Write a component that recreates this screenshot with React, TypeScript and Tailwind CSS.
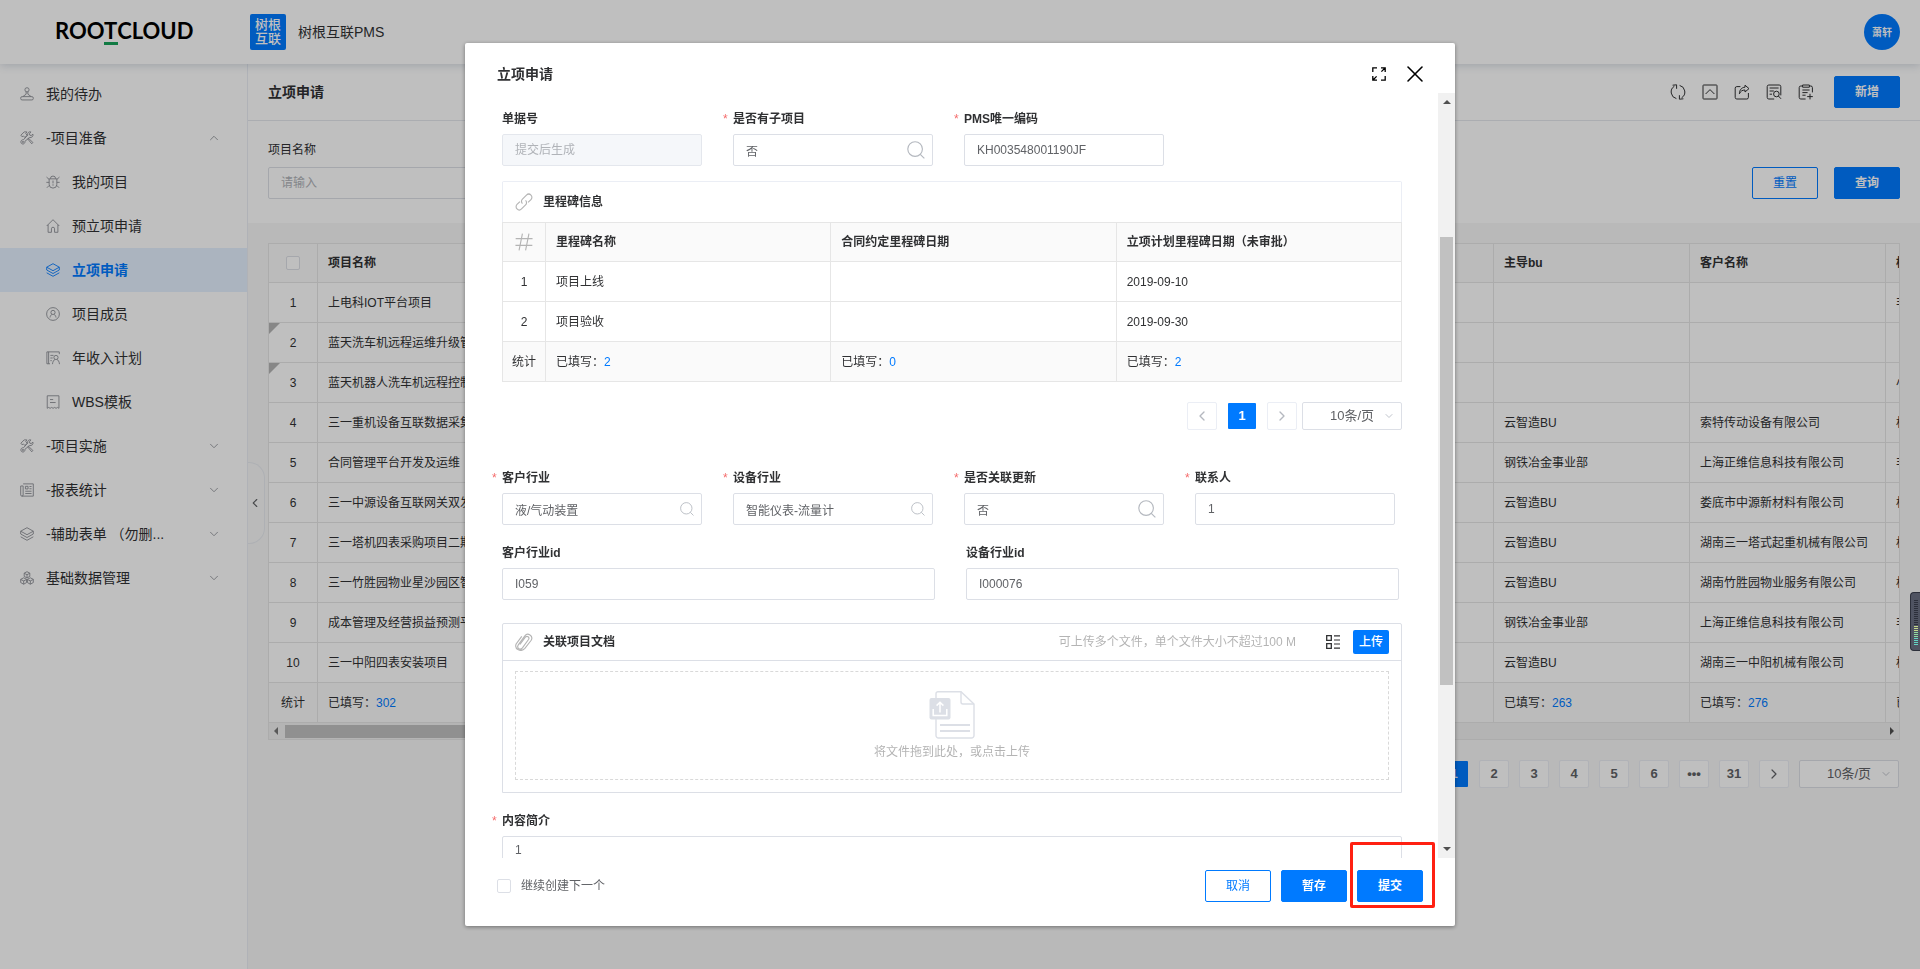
import React from 'react';
import { ChevronDown, ChevronLeft, ChevronRight, ChevronUp, X } from 'lucide-react';

type IconProps = { className?: string };

const stroke = {
  viewBox: '0 0 16 16',
  fill: 'none',
  stroke: 'currentColor',
  strokeWidth: 1,
  'aria-hidden': true,
};

function StampIcon({ className }: IconProps) {
  return (
    <svg {...stroke} className={className}>
      <circle cx="8" cy="3.2" r="2.4" />
      <path d="M7 5.6v2.6L3.2 11M9 5.6v2.6l3.8 2.8" />
      <rect x="0.8" y="11" width="14.4" height="3.8" rx="1.6" />
    </svg>
  );
}

function ToolsIcon({ className }: IconProps) {
  return (
    <svg {...stroke} className={className}>
      <path d="M1 4.8 4.8 1h3L6.6 3l1.6 1.8-2.6 2.6L3.8 5.6 2.4 6.6z" />
      <path d="m8.6 8.8 4.8 5.8 1.4-1.4-5.4-5.2" />
      <path d="M14.8 3.6 12.8 5.2l-1.6-.4-.4-1.6L12.4 1c-2.2-.6-4.2 1.2-3.6 3.6L4 10c-1.8-.2-3.2 1-3 2.8.2 1.6 2 2.6 3.4 1.8 1-.6 1.4-1.6 1.2-2.8l5.4-4.4c2.4.6 4.4-1.4 3.8-3.8z" />
      <circle cx="3.4" cy="12.5" r="0.7" />
    </svg>
  );
}

function BugIcon({ className }: IconProps) {
  return (
    <svg {...stroke} className={className}>
      <path d="M5 4.2a3 3 0 0 1 6 0" />
      <path d="M3.6 4.4h8.8v6.2a4.4 4.4 0 0 1-8.8 0z" />
      <path d="M.6 2.4 3.6 5M15.4 2.4 12.4 5M.4 8.4h3.2M15.6 8.4h-3.2M1 14.6l2.8-2.8M15 14.6l-2.8-2.8M8 6.4v3.2M8 10.6v1.6" />
    </svg>
  );
}

function HomeIcon({ className }: IconProps) {
  return (
    <svg {...stroke} className={className}>
      <path d="M.8 8 8 .8 15.2 8M2.4 6.6v8.6h3.8V11.2a1.8 1.8 0 0 1 3.6 0v4h3.8V6.6" />
    </svg>
  );
}

function LayersIcon({ className }: IconProps) {
  return (
    <svg {...stroke} className={className}>
      <path d="M8 .8 15.2 4.8 8 8.8.8 4.8z" />
      <path d="M.8 8 8 12l7.2-4M.8 11.2 8 15.2l7.2-4M.8 4.8V8M15.2 4.8V8" />
    </svg>
  );
}

function MemberIcon({ className }: IconProps) {
  return (
    <svg {...stroke} className={className}>
      <circle cx="8" cy="8" r="7.3" />
      <circle cx="8" cy="6.2" r="2.4" />
      <path d="M4.6 12c.2-2 1.2-3 2.2-3.5M11.4 12c-.2-2-1.2-3-2.2-3.5" />
    </svg>
  );
}

function PlanIcon({ className }: IconProps) {
  return (
    <svg {...stroke} className={className}>
      <path d="M4.6 14.6H1V1h14.2v2.6M3 1v13.6M5 5h3.6M5 8h2.6M5 11h1.6" />
      <circle cx="11.4" cy="7.4" r="2.4" />
      <path d="M7.4 15c.2-3 1.6-4.6 2.8-5.4M15.4 15c-.2-3-1.6-4.6-2.8-5.4" />
    </svg>
  );
}

function TemplateIcon({ className }: IconProps) {
  return (
    <svg {...stroke} className={className}>
      <path d="M1.4 15.2V.9h13.4v14.3l-1.6-1-1.7 1-1.7-1-1.7 1-1.7-1-1.7 1-1.7-1z" />
      <path d="M4.6 5.2h3.6M4.6 8.6h6.4" />
    </svg>
  );
}

function NewsIcon({ className }: IconProps) {
  return (
    <svg {...stroke} className={className}>
      <path d="M3.6 1h11.6v14H2.2A1.4 1.4 0 0 1 .8 13.6V3.4h2.8M3.6 3.4v10.2A1.4 1.4 0 0 1 2.2 15" />
      <path d="M6.2 3.8h3v3h-3zM10.8 4h2.4M10.8 6.6h2.4M6 9.4h7.2M6 12h7.2" />
    </svg>
  );
}

function BoxesIcon({ className }: IconProps) {
  return (
    <svg {...stroke} className={className}>
      <path d="M8 .8 11.2 2.4v3.8L8 7.9 4.8 6.2V2.4zM4.2 7.8l3.3 1.7v3.7l-3.3 1.9L.8 13.2V9.5zM11.8 7.8l3.4 1.7v3.7l-3.4 1.9-3.3-1.9V9.5z" />
      <path d="M4.8 2.6 8 4.2l3.2-1.6M8 4.2v3.6M.8 9.7l3.4 1.6 3.3-1.6M4.2 11.3V15M8.5 9.7l3.3 1.6 3.4-1.6M11.8 11.3V15" />
    </svg>
  );
}

function RefreshIcon({ className }: IconProps) {
  return (
    <svg {...stroke} className={className}>
      <path d="M6.4 14.6A6.8 6.8 0 0 1 4.4 2.2M9.6 1.4a6.8 6.8 0 0 1 2 12.4" />
      <path d="M2.6 1.2 6.6.8v4M13.4 14.8l-4 .4v-4" />
    </svg>
  );
}

function CollapseIcon({ className }: IconProps) {
  return (
    <svg {...stroke} className={className}>
      <rect x="1" y="1" width="14" height="14" rx="0.6" />
      <path d="m3.6 10 4.400-4.400 4.400 4.400" />
    </svg>
  );
}

function ShareIcon({ className }: IconProps) {
  return (
    <svg {...stroke} className={className}>
      <path d="M6.4 2.6H2.8a1.6 1.6 0 0 0-1.6 1.6v9.2A1.6 1.6 0 0 0 2.8 15h10a1.6 1.6 0 0 0 1.6-1.6V9" />
      <path d="M11 1.2 15 4.6l-4 3.4V6C8.2 6 6.6 7.2 5.4 9.8 5.4 6 7.6 3.4 11 3.2z" />
    </svg>
  );
}

function LogIcon({ className }: IconProps) {
  return (
    <svg {...stroke} className={className}>
      <path d="M8.2 15H2.8a1.6 1.6 0 0 1-1.6-1.6V2.6A1.6 1.6 0 0 1 2.8 1h10.4a1.6 1.6 0 0 1 1.6 1.6v8.8" />
      <path d="M3.6 4h9M3.6 7h4.2M3.6 10.2h2.4" />
      <circle cx="10.4" cy="10" r="2.8" />
      <path d="m12.4 12 2.6 2.8" />
    </svg>
  );
}

function ClipboardIcon({ className }: IconProps) {
  return (
    <svg {...stroke} className={className}>
      <path d="M4.4 2H2.8a1.6 1.6 0 0 0-1.6 1.6v9.8A1.6 1.6 0 0 0 2.8 15h4.800M11.6 2h1.2a1.6 1.6 0 0 1 1.6 1.6v4.800" />
      <path d="M4.6 1h6.8v2.2H4.6zM4.4 6h7.2M4.4 8.6h5.2M4.4 11.2h3.2M12 9.8v5.6M9.2 12.6h5.6" />
    </svg>
  );
}

function LinkIcon({ className }: IconProps) {
  return (
    <svg {...stroke} className={className}>
      <path d="M6.6 9.4a2.8 2.8 0 0 1 0-4l3.6-3.6a2.8 2.8 0 0 1 4 4l-2.6 2.6" />
      <path d="M9.4 6.6a2.8 2.8 0 0 1 0 4l-3.6 3.6a2.8 2.8 0 0 1-4-4l2.6-2.6" />
    </svg>
  );
}

function HashIcon({ className }: IconProps) {
  return (
    <svg {...stroke} className={className}>
      <path d="M6.6.6 3.6 15.4M12.4.6 9.4 15.4M.6 5h15M.4 11h15" />
    </svg>
  );
}

function ClipIcon({ className }: IconProps) {
  return (
    <svg {...stroke} className={className}>
      <path d="m4.4 10.2 4.8-6.4c1.5-1.9 4.1 0 2.8 2l-5.4 7.4c-2 2.5-5.4.2-3.7-2.6L8.800 2.500C11.200-.7 16.600 2.500 14.400 6.500l-5.600 7.200C5.400 17.500-.8 14.400 1 9.800L6 3" />
    </svg>
  );
}

function SearchIcon({ className }: IconProps) {
  return (
    <svg {...stroke} className={className}>
      <circle cx="7.2" cy="7.2" r="6.5" />
      <path d="m11.800 11.800 3.600 3.600" />
    </svg>
  );
}

function ExpandIcon({ className }: IconProps) {
  return (
    <svg viewBox="0 0 14 14" fill="none" stroke="currentColor" strokeWidth="1.3" className={className} aria-hidden>
      <path d="M5 .8H.8V5M9 .8h4.2V5M13 1 9.4 4.6M5 13.2H.8V9M1 13l3.6-3.6M9 13.2h4.2V9" />
    </svg>
  );
}

function ListIcon({ className }: IconProps) {
  return (
    <svg viewBox="0 0 14 14" fill="none" stroke="currentColor" className={className} aria-hidden>
      <path d="M.7.7h4.6v4.6H.7zM.7 8.7h4.6v4.6H.7z" strokeWidth="1.3" />
      <path d="M8 .8h6M8 5h6M8 9h6M8 13.2h6" strokeWidth="1.2" />
    </svg>
  );
}

function UploadPicture({ className }: IconProps) {
  return (
    <svg viewBox="0 0 46 48" fill="none" className={className} aria-hidden>
      <path d="M9 .7h23L45 13v31.500a2.500 2.500 0 0 1-2.500 2.500H9.500A2.500 2.500 0 0 1 7 44.500V2.700a2 2 0 0 1 2-2z" fill="#fff" stroke="#dcdfe6" strokeWidth="1.4" />
      <path d="M32 .7V11a2 2 0 0 0 2 2h11" stroke="#dcdfe6" strokeWidth="1.4" />
      <path d="M11 34h30M11 40h30" stroke="#dcdfe6" strokeWidth="2" />
      <rect x="0.5" y="7" width="21" height="21.5" rx="2" fill="#dcdfe6" />
      <path d="M4.2 18v6.6h13.6V18M11 21.5v-10M7.6 14.6 11 11.2l3.4 3.4" stroke="#fff" strokeWidth="1.5" />
    </svg>
  );
}

interface NavItem {
  label: string;
  icon: React.ComponentType<IconProps>;
  sub?: boolean;
  active?: boolean;
  arrow?: 'up' | 'down';
}

const NAV_ITEMS: NavItem[] = [
  { label: '我的待办', icon: StampIcon },
  { label: '-项目准备', icon: ToolsIcon, arrow: 'up' },
  { label: '我的项目', icon: BugIcon, sub: true },
  { label: '预立项申请', icon: HomeIcon, sub: true },
  { label: '立项申请', icon: LayersIcon, sub: true, active: true },
  { label: '项目成员', icon: MemberIcon, sub: true },
  { label: '年收入计划', icon: PlanIcon, sub: true },
  { label: 'WBS模板', icon: TemplateIcon, sub: true },
  { label: '-项目实施', icon: ToolsIcon, arrow: 'down' },
  { label: '-报表统计', icon: NewsIcon, arrow: 'down' },
  { label: '-辅助表单 （勿删...', icon: LayersIcon, arrow: 'down' },
  { label: '基础数据管理', icon: BoxesIcon, arrow: 'down' },
];

const ROWS = [
  { name: '上电科IOT平台项目', bu: '', client: '', last: '非', flag: false },
  { name: '蓝天洗车机远程运维升级管', bu: '', client: '', last: '', flag: true },
  { name: '蓝天机器人洗车机远程控制', bu: '', client: '', last: '小', flag: true },
  { name: '三一重机设备互联数据采集', bu: '云智造BU', client: '索特传动设备有限公司', last: '标', flag: false },
  { name: '合同管理平台开发及运维', bu: '钢铁冶金事业部', client: '上海正维信息科技有限公司', last: '非', flag: false },
  { name: '三一中源设备互联网关双发', bu: '云智造BU', client: '娄底市中源新材料有限公司', last: '标', flag: false },
  { name: '三一塔机四表采购项目二期', bu: '云智造BU', client: '湖南三一塔式起重机械有限公司', last: '标', flag: false },
  { name: '三一竹胜园物业星沙园区智', bu: '云智造BU', client: '湖南竹胜园物业服务有限公司', last: '标', flag: false },
  { name: '成本管理及经营损益预测平', bu: '钢铁冶金事业部', client: '上海正维信息科技有限公司', last: '非', flag: false },
  { name: '三一中阳四表安装项目', bu: '云智造BU', client: '湖南三一中阳机械有限公司', last: '标', flag: false },
];

const HIDDEN_COLS = [1, 2, 3, 4, 5];

const TOOLS = [
  { label: '刷新', icon: RefreshIcon },
  { label: '收起', icon: CollapseIcon },
  { label: '分享', icon: ShareIcon },
  { label: '日志', icon: LogIcon },
  { label: '导入', icon: ClipboardIcon },
];

function Button({ children, plain }: { children: React.ReactNode; plain?: boolean }) {
  return (
    <button
      type="button"
      className={`w-[66px] h-8 shrink-0 rounded-xs border border-[#007aff] text-xs ${
        plain ? 'bg-white text-[#007aff]' : 'bg-[#007aff] text-white font-bold'
      }`}
    >
      {children}
    </button>
  );
}

function PageButton({ children, active, muted, label }: { children: React.ReactNode; active?: boolean; muted?: boolean; label?: string }) {
  return (
    <button
      type="button"
      aria-label={label}
      className={`w-[30px] h-7 shrink-0 flex items-center justify-center rounded-xs border text-[13px] font-bold ${
        active ? 'bg-[#007aff] bg-clip-padding border-transparent text-white' : 'bg-white border-[#ebeef5]'
      } ${muted ? 'text-[#b4b8bf]' : active ? '' : 'text-[#606266]'}`}
    >
      {children}
    </button>
  );
}

function PageSize({ id }: { id: string }) {
  return (
    <div className="relative w-[100px] h-7">
      <label htmlFor={id} className="sr-only">每页条数</label>
      <select id={id} className="w-full h-full pl-[27px] appearance-none rounded-xs border border-[#dcdfe6] bg-white text-[13px] text-[#606266]">
        <option>10条/页</option>
      </select>
      <ChevronDown className="absolute right-[7px] top-2 w-3 h-3 text-[#c0c4cc] pointer-events-none" strokeWidth={2} />
    </div>
  );
}

interface FieldProps {
  id: string;
  label: string;
  value?: string;
  placeholder?: string;
  required?: boolean;
  disabled?: boolean;
  search?: 'small' | 'large';
}

function FieldLabel({ id, label, required }: { id: string; label: string; required?: boolean }) {
  return (
    <label htmlFor={id} className="relative block text-xs leading-[18px] font-bold text-[#303133]">
      {required && <span className="absolute -left-2.5 text-[#f56c6c] font-normal">*</span>}
      {label}
    </label>
  );
}

function Field({ id, label, value, placeholder, required, disabled, search }: FieldProps) {
  return (
    <div>
      <FieldLabel id={id} label={label} required={required} />
      <div className="relative mt-1.5">
        <input
          id={id}
          type="text"
          defaultValue={value}
          placeholder={placeholder}
          disabled={disabled}
          className={`w-full h-8 px-3 rounded-xs border text-xs text-[#606266] placeholder:text-[#b0b3b8] ${
            disabled ? 'bg-[#f5f7fa] border-[#e4e7ed]' : 'bg-white border-[#dcdfe6]'
          }`}
        />
        {search && (
          <button type="button" aria-label={`搜索${label}`} className="absolute right-2 inset-y-0 flex items-center text-[#b4b8bf]">
            <SearchIcon className={search === 'large' ? 'w-[18px] h-[18px]' : 'w-3.5 h-3.5'} />
          </button>
        )}
      </div>
    </div>
  );
}

function Header() {
  return (
    <header className="relative z-10 h-16 shrink-0 flex items-center pr-5 bg-white shadow-[0_2px_8px_rgba(40,60,100,0.18)]">
      <div className="w-[250px] pl-[55px] pb-0.5 font-['Lato',sans-serif] font-bold text-[22px] leading-[26px] text-black">
        ROO
        <span className="relative">
          T<span className="absolute left-0 -bottom-px w-[14px] h-[3px] bg-[#17a35a]" />
        </span>
        CLOUD
      </div>
      <div className="w-9 h-9 flex items-center justify-center rounded-xs bg-[#007aff] text-white text-[13px] leading-[14px] font-medium text-center">
        树根
        <br />
        互联
      </div>
      <span className="ml-3 flex-1 text-sm text-[#303133]">树根互联PMS</span>
      <div className="w-9 h-9 flex items-center justify-center rounded-full bg-[#007aff] text-white text-[10px] font-bold">萧轩</div>
    </header>
  );
}

function Sidebar() {
  return (
    <nav className="w-[248px] shrink-0 pt-2 bg-white border-r border-[#ebeef5]">
      {NAV_ITEMS.map((item) => (
        <a
          key={item.label}
          href="#"
          className={`h-11 flex items-center gap-3 pr-[26px] text-sm ${item.sub ? 'pl-[46px]' : 'pl-5'} ${
            item.active ? 'bg-[#e5f0ff] text-[#007aff] font-bold' : 'text-[#303133]'
          }`}
        >
          <item.icon className={`w-3.5 h-3.5 shrink-0 ${item.active ? 'text-[#007aff]' : 'text-[#8a8d93]'}`} />
          <span className="flex-1">{item.label}</span>
          {item.arrow === 'up' && <ChevronUp className="w-3.5 h-3.5 text-[#909399]" strokeWidth={1.5} />}
          {item.arrow === 'down' && <ChevronDown className="w-3.5 h-3.5 text-[#909399]" strokeWidth={1.5} />}
        </a>
      ))}
    </nav>
  );
}

function ProjectTable() {
  const cell = 'border-r border-b border-[#e6e6e6] px-2.5 text-left whitespace-nowrap overflow-hidden';
  return (
    <div className="border border-[#e6e6e6] overflow-hidden">
      <table className="w-[1813px] table-fixed border-separate border-spacing-0 text-xs text-[#303133]">
        <colgroup>
          <col className="w-[49px]" />
          {[0, ...HIDDEN_COLS, 6, 7, 8].map((n) => (
            <col key={n} className="w-[196px]" />
          ))}
        </colgroup>
        <thead>
          <tr className="h-[39px] bg-[#fafafa]">
            <th className={cell}>
              <input type="checkbox" aria-label="全选" className="block mx-auto w-3.5 h-3.5 appearance-none rounded-xs border border-[#dcdfe6] bg-white" />
            </th>
            <th className={`${cell} font-bold`}>项目名称</th>
            {HIDDEN_COLS.map((n) => (
              <th key={n} className={cell} />
            ))}
            <th className={`${cell} font-bold`}>主导bu</th>
            <th className={`${cell} font-bold`}>客户名称</th>
            <th className={`${cell} font-bold`}>标</th>
          </tr>
        </thead>
        <tbody>
          {ROWS.map((row, i) => (
            <tr key={row.name} className="h-10 bg-white">
              <td className="relative border-r border-b border-[#e6e6e6] text-center">
                {row.flag && <span className="absolute left-0 top-0 border-t-[11px] border-r-[11px] border-t-[#b4b4b4] border-r-transparent" />}
                {i + 1}
              </td>
              <td className={cell}>{row.name}</td>
              {HIDDEN_COLS.map((n) => (
                <td key={n} className={cell} />
              ))}
              <td className={cell}>{row.bu}</td>
              <td className={cell}>{row.client}</td>
              <td className={cell}>{row.last}</td>
            </tr>
          ))}
        </tbody>
        <tfoot>
          <tr className="h-10 bg-[#fafafa]">
            <td className="border-r border-b border-[#e6e6e6] text-center">统计</td>
            <td className={cell}>已填写：<span className="text-[#007aff]">302</span></td>
            {HIDDEN_COLS.map((n) => (
              <td key={n} className={cell} />
            ))}
            <td className={cell}>已填写：<span className="text-[#007aff]">263</span></td>
            <td className={cell}>已填写：<span className="text-[#007aff]">276</span></td>
            <td className={cell}>已填写：</td>
          </tr>
        </tfoot>
      </table>
      {/* horizontal scrollbar */}
      <div className="h-4 flex items-center gap-[7px] px-[5px] bg-[#f1f1f1]">
        <span className="border-y-4 border-r-4 border-y-transparent border-r-[#777]" />
        <span className="w-[1050px] h-[13px] bg-[#c1c1c1]" />
        <span className="ml-auto border-y-4 border-l-4 border-y-transparent border-l-[#505050]" />
      </div>
    </div>
  );
}

function Workspace() {
  return (
    <main className="relative flex-1 min-w-0 flex flex-col bg-[#f7f7f7]">
      <div className="h-[57px] shrink-0 flex items-center px-5 bg-white border-b border-[#e4e7ed]">
        <h1 className="flex-1 text-sm font-bold text-[#303133]">立项申请</h1>
        <div className="flex gap-4 mr-5 text-[#303133]">
          {TOOLS.map((tool) => (
            <button key={tool.label} type="button" aria-label={tool.label}>
              <tool.icon className="w-4 h-4" />
            </button>
          ))}
        </div>
        <Button>新增</Button>
      </div>
      <div className="h-[102px] shrink-0 flex items-end gap-4 px-5 pb-6 bg-white">
        <div className="w-[360px] mr-auto">
          <label htmlFor="project-name" className="block mb-2 text-xs leading-[18px] text-[#303133]">项目名称</label>
          <input id="project-name" type="text" placeholder="请输入" className="w-full h-8 px-3 rounded-xs border border-[#dcdfe6] bg-white text-xs placeholder:text-[#b0b3b8]" />
        </div>
        <Button plain>重置</Button>
        <Button>查询</Button>
      </div>
      <div className="p-5">
        <ProjectTable />
        <div className="flex justify-end gap-2.5 pt-5 pr-px">
          <PageButton active>1</PageButton>
          {[2, 3, 4, 5, 6].map((n) => (
            <PageButton key={n}>{n}</PageButton>
          ))}
          <PageButton label="更多页">•••</PageButton>
          <PageButton>31</PageButton>
          <PageButton label="下一页"><ChevronRight className="w-4 h-4" strokeWidth={1.8} /></PageButton>
          <PageSize id="list-page-size" />
        </div>
      </div>
      <button type="button" aria-label="收起侧栏" className="absolute left-0 top-[398px] w-[17px] h-[82px] flex items-center rounded-r-2xl border border-l-0 border-[#e8ebf0] bg-[#f9f9f9] text-[#606266]">
        <ChevronLeft className="w-3.5 h-3.5" strokeWidth={2} />
      </button>
    </main>
  );
}

function MilestoneTable() {
  const cell = 'border border-[#e6e6e6] px-2.5';
  return (
    <section className="mt-[15px] rounded-t-xs border-t border-[#ebeef5] text-xs text-[#303133]">
      <div className="h-10 flex items-center gap-2.5 px-3 border-x border-[#ebeef5]">
        <LinkIcon className="w-[18px] h-[18px] text-[#b4b4b4]" />
        <h3 className="font-bold">里程碑信息</h3>
      </div>
      <table className="w-full table-fixed border-collapse">
        <thead>
          <tr className="h-[39px] bg-[#fafafa] text-left">
            <th className="w-[43px] border border-[#e6e6e6]">
              <HashIcon className="w-[18px] h-[18px] mx-auto text-[#b4b4b4]" />
            </th>
            <th className={`${cell} font-bold`}>里程碑名称</th>
            <th className={`${cell} font-bold`}>合同约定里程碑日期</th>
            <th className={`${cell} font-bold`}>立项计划里程碑日期（未审批）</th>
          </tr>
        </thead>
        <tbody>
          <tr className="h-10">
            <td className="border border-[#e6e6e6] text-center">1</td>
            <td className={cell}>项目上线</td>
            <td className={cell} />
            <td className={cell}>2019-09-10</td>
          </tr>
          <tr className="h-10">
            <td className="border border-[#e6e6e6] text-center">2</td>
            <td className={cell}>项目验收</td>
            <td className={cell} />
            <td className={cell}>2019-09-30</td>
          </tr>
        </tbody>
        <tfoot>
          <tr className="h-10 bg-[#fafafa]">
            <td className="border border-[#e6e6e6] text-center">统计</td>
            <td className={cell}>已填写：<span className="text-[#007aff]">2</span></td>
            <td className={cell}>已填写：<span className="text-[#007aff]">0</span></td>
            <td className={cell}>已填写：<span className="text-[#007aff]">2</span></td>
          </tr>
        </tfoot>
      </table>
    </section>
  );
}

function UploadBox() {
  return (
    <section className="mt-[23px] rounded-t-xs border border-[#dcdfe6] text-xs">
      <div className="h-[37px] flex items-center px-3 border-b border-[#dcdfe6]">
        <ClipIcon className="w-[18px] h-[18px] text-[#b4b4b4]" />
        <h3 className="ml-2.5 flex-1 font-bold text-[#303133]">关联项目文档</h3>
        <span className="text-[#b4b4b4]">可上传多个文件，单个文件大小不超过100 M</span>
        <button type="button" aria-label="列表视图" className="ml-[30px] mr-[13px] text-[#303133]">
          <ListIcon className="w-3.5 h-3.5" />
        </button>
        <button type="button" className="w-9 h-6 rounded-xs bg-[#007aff] text-white font-medium">上传</button>
      </div>
      <div className="mx-3 mt-2.5 mb-3 h-[109px] flex flex-col items-center pt-[19px] border border-dashed border-[#d9d9d9] text-[#b4b4b4]">
        <UploadPicture className="w-[46px] h-12" />
        <p className="mt-1 leading-[18px]">将文件拖到此处，或点击上传</p>
      </div>
    </section>
  );
}

function ApplyDialog() {
  return (
    <div role="dialog" aria-labelledby="dialog-title" className="w-[990px] h-full flex flex-col rounded-xs bg-white shadow-[0_1px_4px_rgba(0,0,0,0.4)]">
      <header className="h-[50px] shrink-0 flex items-center pt-3 pl-8 pr-[33px] text-black">
        <h2 id="dialog-title" className="flex-1 text-sm font-bold text-[#303133]">立项申请</h2>
        <button type="button" aria-label="全屏" className="mr-[22px]"><ExpandIcon className="w-3.5 h-3.5" /></button>
        <button type="button" aria-label="关闭"><X className="w-7 h-7 -m-[7px]" strokeWidth={1.3} /></button>
      </header>

      <div className="flex-1 min-h-0 flex">
        <form className="flex-1 min-w-0 overflow-hidden pt-[17px] pl-[37px] pr-9">
          <div className="grid grid-cols-4 gap-x-[31px] mr-[7px]">
            <Field id="bill-no" label="单据号" placeholder="提交后生成" disabled />
            <Field id="has-child" label="是否有子项目" value="否" required search="large" />
            <Field id="pms-code" label="PMS唯一编码" value="KH003548001190JF" required />
          </div>
          <MilestoneTable />
          <div className="mt-5 flex justify-end gap-2.5">
            <PageButton muted label="上一页"><ChevronLeft className="w-4 h-4" strokeWidth={2} /></PageButton>
            <PageButton active>1</PageButton>
            <div className="flex gap-[5px]">
              <PageButton muted label="下一页"><ChevronRight className="w-4 h-4" strokeWidth={2} /></PageButton>
              <PageSize id="milestone-page-size" />
            </div>
          </div>
          <div className="mt-[39px] mr-[7px] grid grid-cols-4 gap-x-[31px]">
            <Field id="client-industry" label="客户行业" value="液/气动装置" required search="small" />
            <Field id="device-industry" label="设备行业" value="智能仪表-流量计" required search="small" />
            <Field id="link-update" label="是否关联更新" value="否" required search="large" />
            <Field id="contact" label="联系人" value="1" required />
          </div>
          <div className="mt-[19px] mr-[3px] grid grid-cols-2 gap-x-[31px]">
            <Field id="client-industry-id" label="客户行业id" value="I059" />
            <Field id="device-industry-id" label="设备行业id" value="I000076" />
          </div>
          <UploadBox />
          <div className="mt-[19px]">
            <FieldLabel id="summary" label="内容简介" required />
            <textarea id="summary" defaultValue="1" className="block mt-1.5 w-full h-20 px-3 py-[5px] resize-none rounded-xs border border-[#dcdfe6] text-xs text-[#606266]" />
          </div>
        </form>
        {/* vertical scrollbar */}
        <div className="w-[17px] shrink-0 flex flex-col items-center py-[7px] bg-[#f1f1f1]">
          <span className="border-x-4 border-b-4 border-x-transparent border-b-[#505050]" />
          <span className="mt-[133px] w-[13px] h-[448px] bg-[#c1c1c1]" />
          <span className="mt-auto border-x-4 border-t-4 border-x-transparent border-t-[#505050]" />
        </div>
      </div>

      <footer className="h-[68px] shrink-0 flex items-start gap-2.5 pt-3 px-8">
        <label className="h-8 mr-auto flex items-center gap-2.5 text-xs text-[#606266]">
          <input type="checkbox" className="w-3.5 h-3.5 appearance-none rounded-xs border border-[#dcdfe6] bg-white" />
          继续创建下一个
        </label>
        <Button plain>取消</Button>
        <Button>暂存</Button>
        <div className="relative">
          <Button>提交</Button>
          <span className="absolute -left-[7px] -top-7 w-[85px] h-[66px] rounded-xs border-3 border-[#ff2012] pointer-events-none" />
        </div>
      </footer>
    </div>
  );
}

function LevelMeter() {
  return (
    <div className="fixed right-0 top-[592px] w-2.5 h-[59px] flex flex-col items-center gap-px pt-[7px] rounded-l-sm border border-r-0 border-[#2c2f3a] bg-[#4f5361]">
      {Array.from({ length: 23 }, (_, i) => (
        <span key={i} className={`w-1 h-px shrink-0 ${i < 13 ? 'bg-[#2c2f3a]' : i < 16 ? 'bg-[#c5d98a]' : i < 19 ? 'bg-[#8fdca0]' : 'bg-[#63d5c4]'}`} />
      ))}
    </div>
  );
}

export default function App() {
  return (
    <div className="h-screen flex flex-col overflow-hidden font-['Liberation_Sans','Noto_Sans_CJK_SC',sans-serif]">
      <Header />
      <div className="flex-1 min-h-0 flex">
        <Sidebar />
        <Workspace />
      </div>
      <div className="fixed inset-0 z-20 flex justify-center py-[43px] bg-black/25">
        <ApplyDialog />
        <LevelMeter />
      </div>
    </div>
  );
}
